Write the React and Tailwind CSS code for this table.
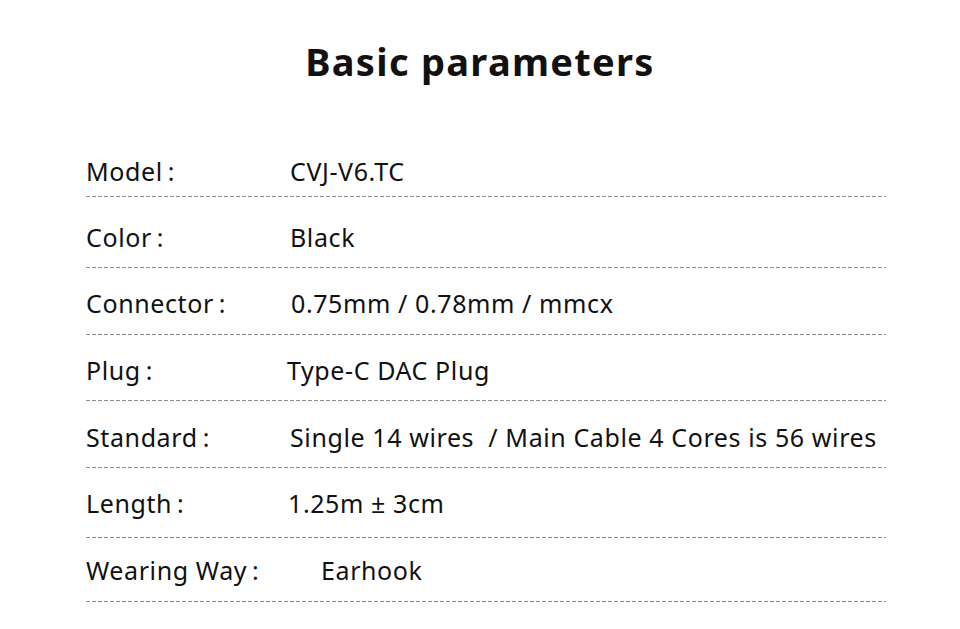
import React from "react";

const rows = [
  { label: "Model", value: "CVJ-V6.TC", row: "pt-[20px] pb-[8px]", val: "ml-[204px]" },
  { label: "Color", value: "Black", row: "pt-[23px] pb-[13px]", val: "ml-[204px]" },
  { label: "Connector", value: "0.75mm / 0.78mm / mmcx", row: "pt-[18px] pb-[14px]", val: "ml-[205px]" },
  { label: "Plug", value: "Type-C DAC Plug", row: "pt-[18px] pb-[13px]", val: "ml-[201px]" },
  { label: "Standard", value: "Single 14 wires\u00a0 / Main Cable 4 Cores is 56 wires", row: "pt-[19px] pb-[13px]", val: "ml-[204px]" },
  { label: "Length", value: "1.25m ± 3cm", row: "pt-[18px] pb-[17px]", val: "ml-[202px]" },
  { label: "Wearing Way", value: "Earhook", row: "pt-[15px] pb-[14px]", val: "ml-[235px]" },
];

export default function App() {
  return (
    <div className="w-[960px] h-[629px] bg-white text-[#111] overflow-hidden" style={{ fontFamily: '"Noto Sans", "Open Sans", sans-serif' }}>
      <h1 className="pt-[36px] h-[134px] text-center text-[38px] leading-[50px] font-bold tracking-[1.3px]">Basic parameters</h1>
      <div className="mx-[86px] w-[800px]">
        {rows.map((r, i) => (
          <div key={i}>
            <div className={"relative flex h-[34px] items-center text-[25px] leading-[34px] tracking-[0.6px] " + r.row} style={{ boxSizing: "content-box" }}>
              <span className="absolute left-0">
                {r.label}
                <span className="ml-[5px]">:</span>
              </span>
              <span className={r.val}>{r.value}</span>
            </div>
            <div className="h-px bg-[repeating-linear-gradient(to_right,#8c8c8c_0_4px,transparent_4px_6px)]" />
          </div>
        ))}
      </div>
    </div>
  );
}
